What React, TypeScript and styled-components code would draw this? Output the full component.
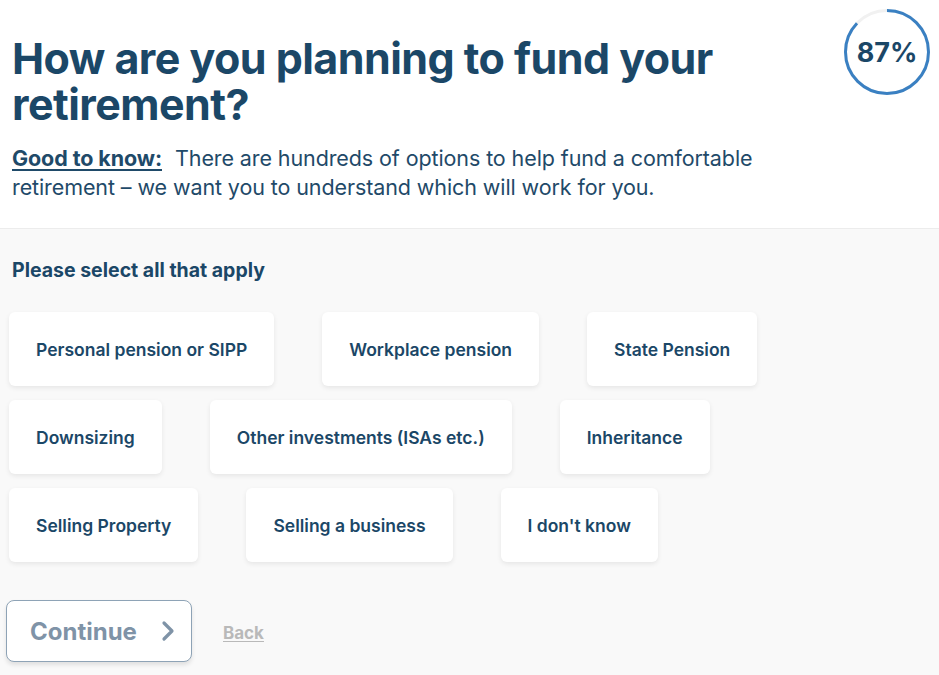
import styled, { createGlobalStyle } from "styled-components";

const GlobalStyle = createGlobalStyle`
  html, body {
    margin: 0;
    padding: 0;
    background: #f9f9f9;
  }
  body {
    font-family: Inter, "Noto Sans", sans-serif;
    color: #1b4767;
  }
`;

const Page = styled.div`
  width: 939px;
  min-height: 675px;
  background: #f9f9f9;
`;

const Header = styled.header`
  position: relative;
  background: #ffffff;
  border-bottom: 1px solid #ececec;
  padding: 35px 12px 26px;
`;

const Title = styled.h1`
  margin: 0;
  font-size: 43px;
  line-height: 46px;
  font-weight: 700;
  letter-spacing: -0.55px;
  color: #1b4767;
  max-width: 760px;
`;

const Intro = styled.p`
  margin: 17px 0 0;
  font-size: 21.5px;
  line-height: 29px;
  font-weight: 400;
  color: #1f4a69;
  letter-spacing: -0.1px;
  max-width: 770px;
`;

const Hint = styled.span`
  display: inline-block;
  font-weight: 700;
  text-decoration: underline;
  text-underline-offset: 3px;
  margin-right: 13px;
`;

const Progress = styled.div`
  position: absolute;
  top: 9px;
  right: 9px;
  width: 86px;
  height: 86px;
  display: flex;
  align-items: center;
  justify-content: center;

  svg {
    position: absolute;
    inset: 0;
  }
`;

const ProgressValue = styled.span`
  font-size: 27px;
  font-weight: 700;
  color: #1b4767;
`;

const Body = styled.main`
  padding: 30px 9px 0;
`;

const Prompt = styled.h2`
  margin: 0 0 31px 3px;
  font-size: 19.5px;
  line-height: 22px;
  font-weight: 700;
  color: #1b4767;
`;

const Options = styled.div`
  display: flex;
  flex-direction: column;
  gap: 14px;
`;

const Row = styled.div`
  display: flex;
  gap: 48px;
`;

const Option = styled.button`
  height: 74px;
  padding: 0 27px;
  border: none;
  border-radius: 6px;
  background: #ffffff;
  box-shadow: 0 2px 5px rgba(0, 0, 0, 0.08);
  font-family: Inter, "Noto Sans", sans-serif;
  font-size: 17.5px;
  font-weight: 600;
  color: #1b4767;
  cursor: pointer;
  white-space: nowrap;
`;

const Actions = styled.div`
  display: flex;
  align-items: center;
  gap: 31px;
  margin: 38px 0 0 -3px;
`;

const ContinueButton = styled.button`
  display: flex;
  align-items: center;
  gap: 24px;
  width: 186px;
  height: 62px;
  padding: 0 0 0 23px;
  border: 1px solid #8ea3b6;
  border-radius: 8px;
  background: #ffffff;
  box-shadow: 0 3px 4px rgba(0, 0, 0, 0.1);
  font-family: Inter, "Noto Sans", sans-serif;
  font-size: 24px;
  font-weight: 700;
  color: #7f93a7;
  cursor: pointer;
`;

const BackLink = styled.a`
  font-size: 17px;
  font-weight: 700;
  color: #b9b9b9;
  text-decoration: underline;
  text-underline-offset: 2px;
  margin-top: 4px;
  cursor: pointer;
`;

const rows = [
  ["Personal pension or SIPP", "Workplace pension", "State Pension"],
  ["Downsizing", "Other investments (ISAs etc.)", "Inheritance"],
  ["Selling Property", "Selling a business", "I don't know"],
];

function ProgressRing({ percent }: { percent: number }) {
  const r = 41.5;
  const c = 2 * Math.PI * r;
  return (
    <Progress>
      <svg width="86" height="86" viewBox="0 0 86 86">
        <circle cx="43" cy="43" r={r} fill="none" stroke="#f1f1f1" strokeWidth="3" />
        <circle
          cx="43"
          cy="43"
          r={r}
          fill="none"
          stroke="#3a80c2"
          strokeWidth="3"
          strokeDasharray={`${(c * percent) / 100} ${c}`}
          transform="rotate(-90 43 43)"
        />
      </svg>
      <ProgressValue>{percent}%</ProgressValue>
    </Progress>
  );
}

export default function App() {
  return (
    <Page>
      <GlobalStyle />
      <Header>
        <Title>How are you planning to fund your retirement?</Title>
        <Intro>
          <Hint>Good to know:</Hint>There are hundreds of options to help fund a
          comfortable retirement – we want you to understand which will work for you.
        </Intro>
        <ProgressRing percent={87} />
      </Header>
      <Body>
        <Prompt>Please select all that apply</Prompt>
        <Options>
          {rows.map((row, i) => (
            <Row key={i}>
              {row.map((label) => (
                <Option key={label}>{label}</Option>
              ))}
            </Row>
          ))}
        </Options>
        <Actions>
          <ContinueButton>
            Continue
            <svg width="14" height="22" viewBox="0 0 14 22" fill="none">
              <path
                d="M3 3l8 8-8 8"
                stroke="#7f93a7"
                strokeWidth="3.2"
                strokeLinecap="round"
                strokeLinejoin="round"
              />
            </svg>
          </ContinueButton>
          <BackLink>Back</BackLink>
        </Actions>
      </Body>
    </Page>
  );
}
